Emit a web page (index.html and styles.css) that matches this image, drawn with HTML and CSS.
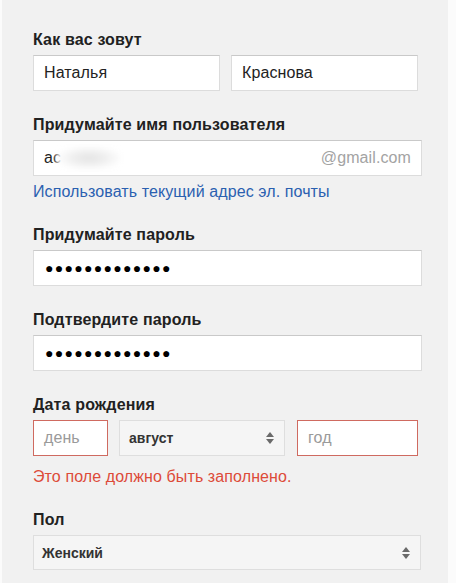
FILE: index.html
```html
<!DOCTYPE html>
<html lang="ru">
<head>
<meta charset="utf-8">
<title>Создайте аккаунт Google</title>
<link rel="stylesheet" href="styles.css">
</head>
<body>
<div class="panel">
  <div class="field">
    <div class="label">Как вас зовут</div>
    <div class="name-row">
      <div class="input"><span class="value">Наталья</span></div>
      <div class="input"><span class="value">Краснова</span></div>
    </div>
  </div>

  <div class="field">
    <div class="label">Придумайте имя пользователя</div>
    <div class="input input-full username">
      <span class="value">ac</span><span class="blur"></span>
      <span class="suffix">@gmail.com</span>
    </div>
    <a class="link" href="#">Использовать текущий адрес эл. почты</a>
  </div>

  <div class="field">
    <div class="label">Придумайте пароль</div>
    <div class="input input-full"><span class="dots">●●●●●●●●●●●●●</span></div>
  </div>

  <div class="field">
    <div class="label">Подтвердите пароль</div>
    <div class="input input-full"><span class="dots">●●●●●●●●●●●●●</span></div>
  </div>

  <div class="field">
    <div class="label">Дата рождения</div>
    <div class="date-row">
      <div class="input error"><span class="placeholder">день</span></div>
      <div class="select">
        <span class="select-text">август</span>
        <span class="arrows"><span class="up"></span><span class="down"></span></span>
      </div>
      <div class="input error"><span class="placeholder">год</span></div>
    </div>
    <div class="error-text">Это поле должно быть заполнено.</div>
  </div>

  <div class="field">
    <div class="label">Пол</div>
    <div class="select select-full">
      <span class="select-text">Женский</span>
      <span class="arrows"><span class="up"></span><span class="down"></span></span>
    </div>
  </div>
</div>
</body>
</html>
```

FILE: styles.css
```css
html, body {
  margin: 0;
  padding: 0;
}
body {
  background: #fbfbfb;
  font-family: "Liberation Sans", Arial, sans-serif;
  color: #222;
}
.panel {
  margin-left: 2px;
  width: 446px;
  min-height: 583px;
  box-sizing: border-box;
  background: #f1f1f1;
  padding: 31px 0 0 31px;
}
.field {
  margin-bottom: 25px;
}
.label {
  font-size: 16px;
  font-weight: bold;
  line-height: 18px;
  letter-spacing: 0.15px;
  color: #212121;
  margin-bottom: 6px;
}
.name-row {
  display: grid;
  grid-template-columns: 187px 187px;
  column-gap: 11px;
}
.input {
  height: 36px;
  box-sizing: border-box;
  background: #fff;
  border: 1px solid #dcdcdc;
  border-top-color: #c9c9c9;
  display: flex;
  align-items: center;
  padding: 0 10px;
  font-size: 16px;
  letter-spacing: 0.1px;
}
.input-full {
  width: 389px;
}
.value {
  color: #222;
}
.blur {
  display: inline-block;
  width: 64px;
  height: 22px;
  margin-left: -4px;
  background: radial-gradient(ellipse at center, #e2e2e2 0%, #efefef 40%, #fff 75%);
  filter: blur(3px);
}
.suffix {
  margin-left: auto;
  color: #a3a3a3;
}
.link {
  display: block;
  margin-top: 7px;
  font-size: 16px;
  line-height: 18px;
  letter-spacing: 0.1px;
  color: #2a60b0;
  text-decoration: none;
}
.dots {
  font-size: 14px;
  letter-spacing: 1.3px;
  color: #000;
  padding-left: 1px;
}
.date-row {
  display: grid;
  grid-template-columns: 75px 167px 121px;
  column-gap: 11px;
}
.date-row .select {
  margin-right: 1px;
}
.input.error {
  border: 1px solid #cf6a60;
}
.placeholder {
  color: #9a9a9a;
}
.select {
  height: 36px;
  box-sizing: border-box;
  background: #f5f5f5;
  border: 1px solid #dedede;
  display: flex;
  align-items: center;
  padding: 0 9px 0 9px;
}
.select-full {
  width: 388px;
  height: 35px;
  padding-left: 8px;
}
.select-text {
  font-size: 14px;
  font-weight: bold;
  color: #333;
}
.arrows {
  margin-left: auto;
  display: flex;
  flex-direction: column;
  align-items: center;
  gap: 2px;
  padding-right: 1px;
}
.up, .down {
  width: 0;
  height: 0;
  border-left: 4px solid transparent;
  border-right: 4px solid transparent;
}
.up {
  border-bottom: 5px solid #6a6a6a;
}
.down {
  border-top: 5px solid #6a6a6a;
}
.error-text {
  margin-top: 12px;
  font-size: 16px;
  line-height: 18px;
  letter-spacing: 0.1px;
  color: #dd4b39;
}
```
